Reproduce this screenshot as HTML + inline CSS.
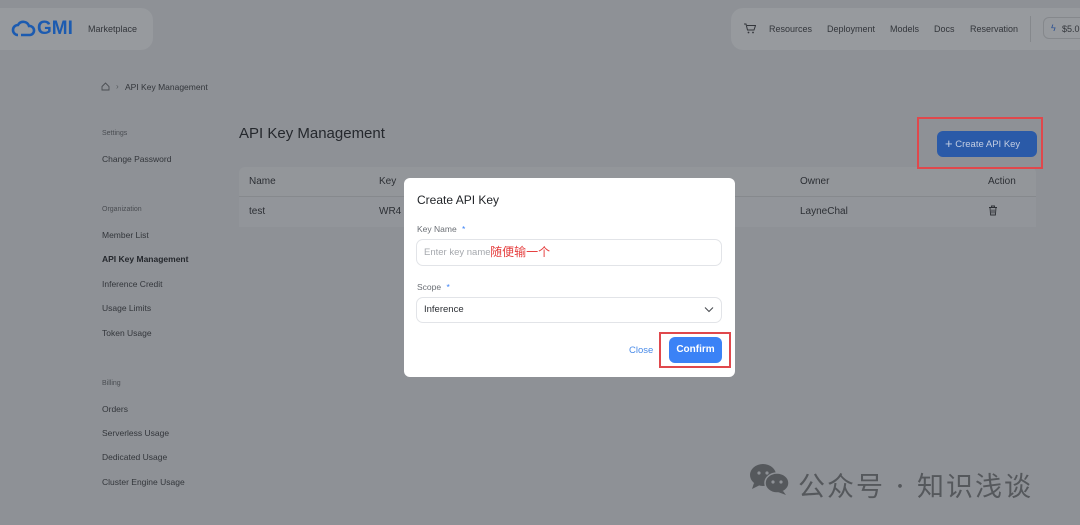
<!DOCTYPE html>
<html><head><meta charset="utf-8">
<style>
*{margin:0;padding:0;box-sizing:border-box}
body{width:1080px;height:525px;overflow:hidden;background:#8e9196;font-family:"Liberation Sans","Noto Sans CJK SC",sans-serif;color:#2c2f34;position:relative}
.abs{position:absolute}
.pill{background:#979a9e;border-radius:12px}
.nav{font-size:9px;color:#33363b}
.side{font-size:8.5px;color:#33363b;position:absolute;left:102px}
.sec{font-size:7px;color:#4a4d52;position:absolute;left:102px}
.th{font-size:10px;color:#2c2f34;position:absolute;top:176px}
.td{font-size:10px;color:#2c2f34;position:absolute;top:206px}
</style></head><body>
<div class="abs pill" style="left:0;top:8px;width:153px;height:42px;border-radius:0 12px 12px 0"></div>
<svg class="abs" style="left:11px;top:20px" width="26" height="18" viewBox="0 0 26 18"><path d="M7 15a5 5 0 0 1 0-10 6 6 0 0 1 11 1 4.5 4.5 0 0 1 1 9H10" fill="none" stroke="#1c5bb0" stroke-width="2.6"/></svg>
<div class="abs" style="left:37px;top:18px;font-size:19px;font-weight:bold;color:#1c5bb0">GMI</div>
<div class="abs nav" style="left:88px;top:24px">Marketplace</div>
<div class="abs pill" style="left:731px;top:8px;width:360px;height:42px"></div>
<svg class="abs" style="left:744px;top:23px" width="12" height="11" viewBox="0 0 12 11"><path d="M0 1h2l1.5 6h6.5l1.5-4.5H3" fill="none" stroke="#33363b" stroke-width="1"/><circle cx="4.5" cy="9.5" r=".9" fill="#33363b"/><circle cx="9" cy="9.5" r=".9" fill="#33363b"/></svg>
<div class="abs nav" style="left:769px;top:24px">Resources</div>
<div class="abs nav" style="left:827px;top:24px">Deployment</div>
<div class="abs nav" style="left:890px;top:24px">Models</div>
<div class="abs nav" style="left:934px;top:24px">Docs</div>
<div class="abs nav" style="left:970px;top:24px">Reservation</div>
<div class="abs" style="left:1030px;top:16px;width:1px;height:26px;background:#85888c"></div>
<div class="abs" style="left:1043px;top:17px;width:60px;height:22px;border:1px solid #85888c;border-radius:6px"></div>
<div class="abs nav" style="left:1051px;top:23px;color:#2a4f92">ϟ</div>
<div class="abs nav" style="left:1062px;top:24px">$5.0</div>

<svg class="abs" style="left:101px;top:82px" width="9" height="9" viewBox="0 0 9 9"><path d="M1 4.5L4.5 1 8 4.5V8H1z" fill="none" stroke="#4a4d52" stroke-width=".9"/></svg>
<div class="abs" style="left:116px;top:82px;font-size:8px;color:#55585d">›</div>
<div class="abs" style="left:125px;top:82px;font-size:8.5px;color:#33363b">API Key Management</div>

<div class="sec" style="top:130px">Settings</div>
<div class="side" style="top:154px">Change Password</div>
<div class="sec" style="top:206px">Organization</div>
<div class="side" style="top:230px">Member List</div>
<div class="side" style="top:254px;font-weight:bold;color:#25282d">API Key Management</div>
<div class="side" style="top:279px">Inference Credit</div>
<div class="side" style="top:303px">Usage Limits</div>
<div class="side" style="top:328px">Token Usage</div>
<div class="sec" style="top:380px">Billing</div>
<div class="side" style="top:404px">Orders</div>
<div class="side" style="top:428px">Serverless Usage</div>
<div class="side" style="top:452px">Dedicated Usage</div>
<div class="side" style="top:477px">Cluster Engine Usage</div>

<div class="abs" style="left:239px;top:125px;font-size:15px;color:#25282d">API Key Management</div>

<div class="abs" style="left:239px;top:167px;width:797px;height:30px;background:#93969a;border-radius:6px 6px 0 0;border-bottom:1px solid #86898d"></div>
<div class="abs" style="left:239px;top:197px;width:797px;height:30px;background:#92959a"></div>
<div class="th" style="left:249px">Name</div>
<div class="th" style="left:379px">Key</div>
<div class="th" style="left:800px">Owner</div>
<div class="th" style="left:988px">Action</div>
<div class="td" style="left:249px">test</div>
<div class="td" style="left:379px">WR4</div>
<div class="td" style="left:800px">LayneChal</div>
<svg class="abs" style="left:988px;top:205px" width="10" height="11" viewBox="0 0 10 11"><path d="M1 2.5h8M3.5 2.5V1h3v1.5M2 2.5l.6 7.5h4.8L8 2.5M4 4.5v4M6 4.5v4" fill="none" stroke="#2c2f34" stroke-width=".9"/></svg>

<div class="abs" style="left:917px;top:117px;width:126px;height:52px;border:2.5px solid #e0484c"></div>
<div class="abs" style="left:937px;top:131px;width:100px;height:26px;background:#2a5aa8;border-radius:6px;color:#c2cde2;font-size:9.5px;line-height:26px;padding-left:8px"><span style="font-size:13px;vertical-align:-1px">+</span> Create API Key</div>

<div class="abs" style="left:404px;top:178px;width:331px;height:199px;background:#fff;border-radius:6px"></div>
<div class="abs" style="left:417px;top:193px;font-size:12px;color:#1f2226">Create API Key</div>
<div class="abs" style="left:417px;top:224px;font-size:8.5px;color:#6b6f75">Key Name <span style="color:#3b82f6;margin-left:3px">*</span></div>
<div class="abs" style="left:416px;top:239px;width:306px;height:27px;border:1px solid #e2e4e8;border-radius:7px"></div>
<div class="abs" style="left:424px;top:243px;font-size:9.5px;color:#a6a9ae">Enter key name <span style="color:#e53e3e;font-size:12px;margin-left:-3px;vertical-align:-1px">随便输一个</span></div>
<div class="abs" style="left:417px;top:282px;font-size:8.5px;color:#6b6f75">Scope <span style="color:#3b82f6;margin-left:3px">*</span></div>
<div class="abs" style="left:416px;top:297px;width:306px;height:26px;border:1px solid #e2e4e8;border-radius:7px"></div>
<div class="abs" style="left:424px;top:304px;font-size:9.5px;color:#2c2f34">Inference</div>
<svg class="abs" style="left:704px;top:306px" width="10" height="7" viewBox="0 0 10 7"><path d="M1 1.5l4 4 4-4" fill="none" stroke="#4a4d52" stroke-width="1.1"/></svg>
<div class="abs" style="left:629px;top:345px;font-size:9.5px;color:#4a8be8">Close</div>
<div class="abs" style="left:659px;top:332px;width:72px;height:36px;border:2.5px solid #e0484c"></div>
<div class="abs" style="left:669px;top:337px;width:53px;height:26px;background:#3b82f6;border-radius:6px;color:#fff;font-size:10px;font-weight:bold;line-height:26px;text-align:center">Confirm</div>

<svg class="abs" style="left:748px;top:462px" width="42" height="34" viewBox="0 0 42 34"><ellipse cx="15" cy="13" rx="13" ry="11" fill="#55585c"/><path d="M6 21l-2 6 8-4z" fill="#55585c"/><ellipse cx="29" cy="21" rx="12" ry="10" fill="#55585c" stroke="#8e9196" stroke-width="1.5"/><path d="M35 29l3 4-8-3z" fill="#55585c"/><circle cx="11" cy="11" r="1.6" fill="#8e9196"/><circle cx="19" cy="11" r="1.6" fill="#8e9196"/><circle cx="25" cy="20" r="1.6" fill="#8e9196"/><circle cx="33" cy="20" r="1.6" fill="#8e9196"/></svg>
<div class="abs" style="left:798px;top:465px;font-size:27px;color:#55585c;letter-spacing:2px;font-family:'Noto Sans CJK SC',sans-serif">公众号<span style="font-size:18px;margin:0 6px;vertical-align:3px">·</span>知识浅谈</div>
</body></html>
